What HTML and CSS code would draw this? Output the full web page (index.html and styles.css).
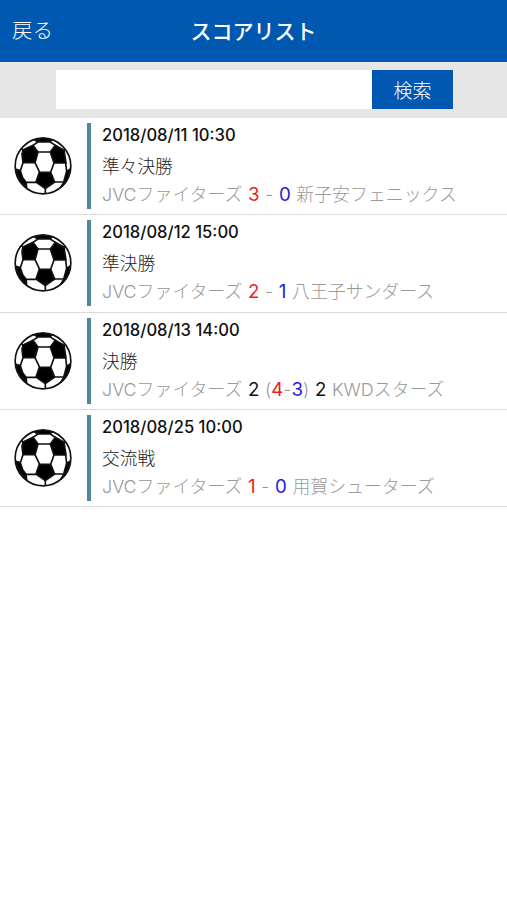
FILE: index.html
```html
<!DOCTYPE html>
<html lang="ja">
<head>
    <meta charset="UTF-8">
    <meta name="viewport" content="width=device-width, initial-scale=1.0">
    <title>スコアリスト</title>
    <link rel="stylesheet" href="styles.css">
</head>
<body>
    <svg width="0" height="0" class="defs">
        <symbol id="ball" viewBox="0 0 174 174">
            <circle cx="87" cy="87" r="83.5" fill="#fff" stroke="#111" stroke-width="5"/>
            <g fill="#000" stroke="#111" stroke-width="5" stroke-linejoin="round">
                <path d="M76 106H110L122 135L94 155L66 135Z"/>
                <path d="M27 39L57 25L72 45L63 77H27L24 52Z"/>
                <path d="M109 45L124 25L150 40L156 78H120Z"/>
                <path d="M62 9L87 3L114 9L108 15H72Z"/>
                <path d="M6 97L19 101L26 122L36 136L38 151Q12 132 6 97Z"/>
                <path d="M168 97L158 103L149 136L140 151Q165 132 168 97Z"/>
            </g>
            <path fill="none" stroke="#111" stroke-width="5" d="M72 45H109M63 77L77 106M120 78L110 106M72 15L57 25M109 15L124 25M27 77L19 101M155 78L158 103M36 136H66M122 135H149M94 155V170M27 39L22 34M150 40L154 40"/>
        </symbol>
    </svg>

    <header>
        <a class="back">戻る</a>
        <h1>スコアリスト</h1>
    </header>

    <form class="search">
        <input type="text">
        <button type="button">検索</button>
    </form>

    <ul class="score-list">
        <li>
            <svg class="ball"><use href="#ball"/></svg>
            <div class="game">
                <p class="date">2018/08/11 10:30</p>
                <p class="round">準々決勝</p>
                <p class="score">JVCファイターズ <b class="home">3</b> - <b class="away">0</b> 新子安フェニックス</p>
            </div>
        </li>
        <li>
            <svg class="ball"><use href="#ball"/></svg>
            <div class="game">
                <p class="date">2018/08/12 15:00</p>
                <p class="round">準決勝</p>
                <p class="score">JVCファイターズ <b class="home">2</b> - <b class="away">1</b> 八王子サンダース</p>
            </div>
        </li>
        <li>
            <svg class="ball"><use href="#ball"/></svg>
            <div class="game">
                <p class="date">2018/08/13 14:00</p>
                <p class="round">決勝</p>
                <p class="score">JVCファイターズ <b>2</b> (<b class="home">4</b>-<b class="away">3</b>) <b>2</b> KWDスターズ</p>
            </div>
        </li>
        <li>
            <svg class="ball"><use href="#ball"/></svg>
            <div class="game">
                <p class="date">2018/08/25 10:00</p>
                <p class="round">交流戦</p>
                <p class="score">JVCファイターズ <b class="home">1</b> - <b class="away">0</b> 用賀シューターズ</p>
            </div>
        </li>
    </ul>
</body>
</html>
```
FILE: styles.css
```css
* {
    box-sizing: border-box;
}
body {
    margin: 0;
    background-color: #fff;
    font-family: Inter, "Noto Sans CJK JP", sans-serif;
}
.defs {
    display: block;
}
header {
    display: grid;
    grid-template-columns: 1fr auto 1fr;
    align-items: center;
    height: 62px;
    padding: 0 12px;
    background-color: #0058b1;
    color: #fff;
}
.back {
    font-size: 20.5px;
    font-weight: 300;
    line-height: 30px;
}
h1 {
    margin: 0;
    padding-top: 1px;
    font-size: 21px;
    font-weight: 500;
    line-height: 30px;
}
.search {
    display: flex;
    height: 56px;
    padding: 8px 0 0 56px;
    margin: 0;
    background-color: #e6e6e6;
}
.search input {
    width: 316px;
    height: 39px;
    padding: 0 8px;
    border: none;
    background-color: #fff;
}
.search button {
    width: 81px;
    height: 39px;
    padding: 0;
    border: none;
    background-color: #0058b1;
    color: #fff;
    font-family: inherit;
    font-size: 19px;
    font-weight: 300;
}
.score-list {
    margin: 0;
    padding: 0;
    list-style: none;
}
.score-list li {
    display: flex;
    height: 97.25px;
    padding: 5px 0 5px 14px;
    border-bottom: 1px solid #dadada;
}
.ball {
    width: 58px;
    height: 58px;
    margin: 14px 15px 0 0;
}
.game {
    height: 86px;
    padding-left: 11px;
    border-left: 4px solid #4f859d;
    white-space: nowrap;
}
.game p {
    margin: 0;
}
.date {
    height: 28px;
    font-size: 16.6px;
    font-weight: 500;
    line-height: 25px;
    color: #111;
}
.round {
    height: 28px;
    font-size: 17.7px;
    font-weight: 300;
    line-height: 31px;
    color: #222;
}
.score {
    font-size: 17.9px;
    font-weight: 300;
    line-height: 31px;
    word-spacing: 0.6px;
    color: #999;
}
.score b {
    font-size: 18.7px;
    font-weight: 400;
    color: #111;
}
.score .home {
    color: #f01c1c;
}
.score .away {
    color: #1c1ce0;
}
```
